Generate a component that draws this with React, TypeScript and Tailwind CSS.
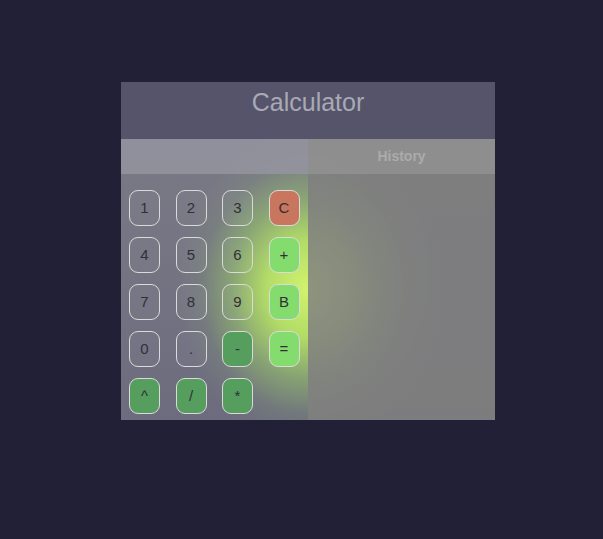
import React from "react";

type Key = { label: string; kind: "gray" | "red" | "light" | "dark" };

const keys: Key[] = [
  { label: "1", kind: "gray" },
  { label: "2", kind: "gray" },
  { label: "3", kind: "gray" },
  { label: "C", kind: "red" },
  { label: "4", kind: "gray" },
  { label: "5", kind: "gray" },
  { label: "6", kind: "gray" },
  { label: "+", kind: "light" },
  { label: "7", kind: "gray" },
  { label: "8", kind: "gray" },
  { label: "9", kind: "gray" },
  { label: "B", kind: "light" },
  { label: "0", kind: "gray" },
  { label: ".", kind: "gray" },
  { label: "-", kind: "dark" },
  { label: "=", kind: "light" },
  { label: "^", kind: "dark" },
  { label: "/", kind: "dark" },
  { label: "*", kind: "dark" },
];

const kindClass: Record<Key["kind"], string> = {
  gray: "bg-[#ffffff08]",
  red: "bg-[#c8765e]",
  light: "bg-[#84dc6e]",
  dark: "bg-[#559e5e]",
};

export default function App() {
  return (
    <div
      className="w-[603px] h-[539px] bg-[#212037] flex items-start pl-[121px] pt-[82px]"
      style={{ fontFamily: '"Liberation Sans", Arial, sans-serif' }}
    >
      <div className="w-[374px] flex flex-col">
        <div className="h-[57px] bg-[#55546a] flex justify-center pt-[6px]">
          <span className="text-[25px] leading-[28px] text-[#a9a9b6]">Calculator</span>
        </div>
        <div className="relative h-[281px] grid grid-cols-2 bg-[linear-gradient(180deg,#7a7a86,#6c6c7e)] overflow-hidden">
          <div className="absolute inset-0 pointer-events-none bg-[radial-gradient(ellipse_105px_125px_at_186px_150px,rgba(210,242,110,1)_0px,rgba(185,232,100,0.9)_40px,rgba(155,205,105,0.55)_75px,rgba(135,165,115,0.2)_105px,rgba(120,120,130,0)_130px)]" />
          <div className="relative flex flex-col">
            <div className="h-[35px] bg-[#9696a0d0]" />
            <div className="grid grid-cols-[repeat(4,31px)] auto-rows-[36px] gap-x-[15.5px] gap-y-[11px] pl-[8px] pt-[16px]">
              {keys.map((k) => (
                <button
                  key={k.label}
                  className={`rounded-[9px] border-[1.5px] border-[#dadada] flex items-center justify-center text-[15px] text-[#303036] ${kindClass[k.kind]}`}
                >
                  {k.label}
                </button>
              ))}
            </div>
          </div>
          <div className="relative flex flex-col bg-[#7e7e7ee6]">
            <div className="absolute inset-0 pointer-events-none bg-[radial-gradient(ellipse_120px_140px_at_0px_150px,rgba(170,190,130,0.18)_0px,rgba(150,160,130,0.08)_70px,rgba(128,128,128,0)_140px)]" />
            <div className="relative h-[35px] bg-[#949494c0] flex items-center justify-center">
              <span className="text-[14px] font-bold text-[#ababab]">History</span>
            </div>
          </div>
        </div>
      </div>
    </div>
  );
}
